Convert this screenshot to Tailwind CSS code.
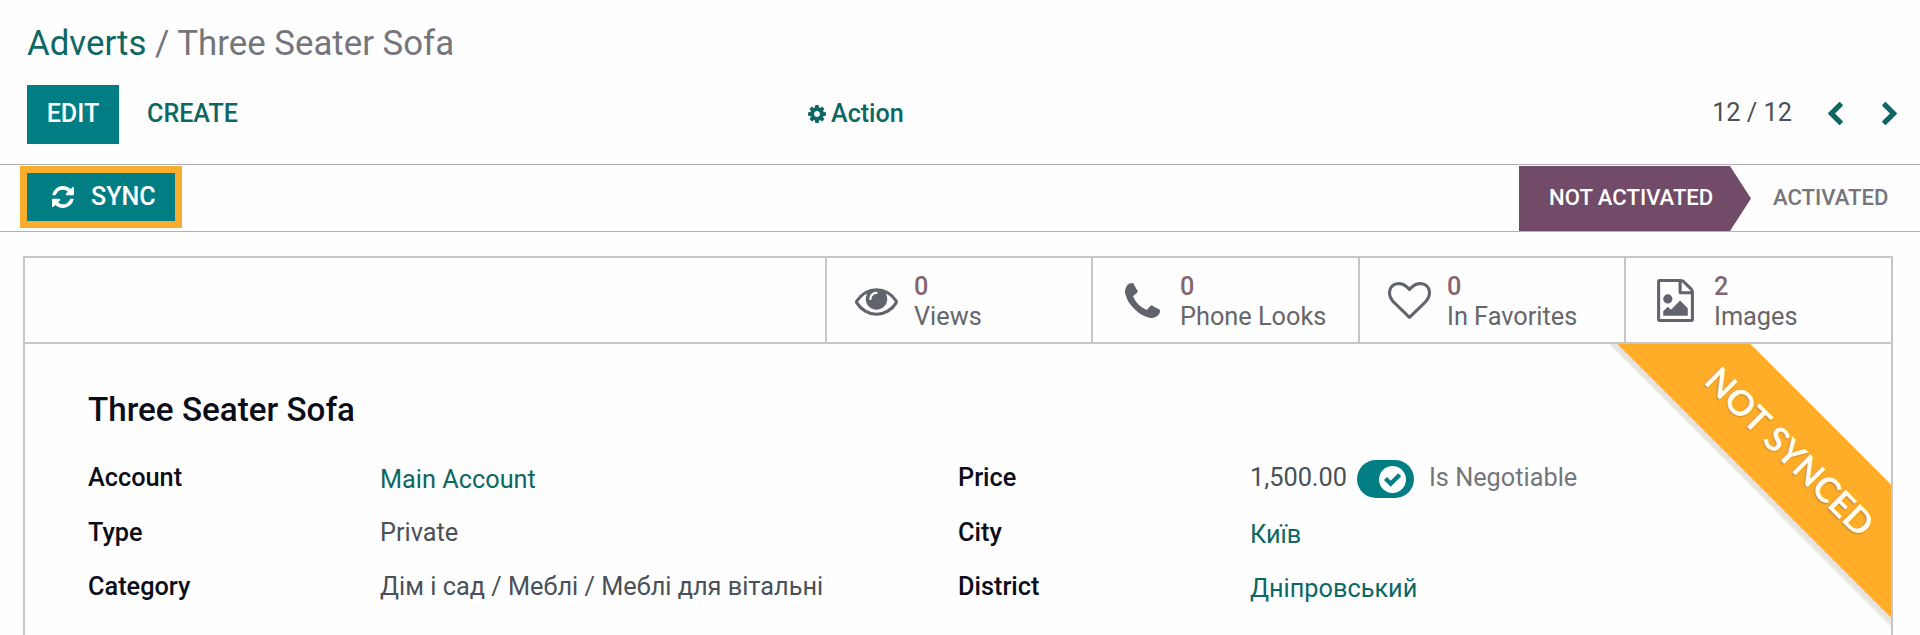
<!DOCTYPE html>
<html lang="en">
<head>
    <meta charset="UTF-8">
    <meta name="viewport" content="width=device-width, initial-scale=1.0">
    <title>Three Seater Sofa - Adverts</title>
    <script src="https://cdn.jsdelivr.net/npm/@tailwindcss/browser@4"></script>
</head>
<body class="bg-[#fefefe] h-[635px] overflow-hidden font-['Roboto',sans-serif] text-[25.3px] text-[#495057] whitespace-nowrap">
    <!-- Control panel -->
    <header class="h-[164px]">
        <div class="h-[85px] pl-[27px] pt-px flex items-center text-[34.8px]">
            <h1 class="text-[#75757c]"><a href="#" class="text-[#0d6763]">Adverts</a> / Three Seater Sofa</h1>
        </div>
        <div class="h-[59px] pl-[27px] pr-[23px] grid grid-cols-[781px_1fr_auto] items-center">
            <div class="flex h-full items-center font-medium text-[25.1px]">
                <button class="w-[92px] h-full pb-px bg-[#017e84] text-white">EDIT</button>
                <button class="ml-7 pb-px text-[#0d6763]">CREATE</button>
            </div>
            <button class="flex items-center gap-[5px] pb-px font-medium text-[25.1px] text-[#0d6763]">
                <svg class="w-[18px] h-[18px]" viewBox="128 128 1536 1536" fill="currentColor"><path d="M1152 896q0-106-75-181t-181-75-181 75-75 181 75 181 181 75 181-75 75-181zm512-109v222q0 12-8 23t-20 13l-185 28q-19 54-39 91 35 50 107 138 10 12 10 25t-9 23q-27 37-99 108t-94 71q-12 0-26-9l-138-108q-44 23-91 38-16 136-29 186-7 28-36 28h-222q-14 0-24.5-8.5t-11.5-21.5l-28-184q-49-16-90-37l-141 107q-10 9-25 9-14 0-25-11-126-114-165-168-7-10-7-23 0-12 8-23 15-21 51-66.5t54-70.5q-27-50-41-99l-183-27q-13-2-21-12.5t-8-23.5v-222q0-12 8-23t19-13l186-28q14-46 39-92-40-57-107-138-10-12-10-24 0-10 9-23 26-36 98.5-107.5t94.5-71.5q13 0 26 10l138 107q44-23 91-38 16-136 29-186 7-28 36-28h222q14 0 24.5 8.5t11.5 21.5l28 184q49 16 90 37l142-107q9-9 24-9 13 0 25 10 129 119 165 170 7 8 7 22 0 12-8 23-15 21-51 66.5t-54 70.5q26 50 41 98l183 28q13 2 21 12.5t8 23.5z"/></svg>
                Action
            </button>
            <div class="flex items-center pb-[3px] text-[#0d6763]">
                <span class="text-[#495057]">12 / 12</span>
                <svg class="ml-9 w-[15px] h-[23px]" viewBox="410 26 1036 1612" fill="currentColor"><path d="M1427 301l-531 531 531 531q19 19 19 45t-19 45l-166 166q-19 19-45 19t-45-19l-742-742q-19-19-19-45t19-45l742-742q19-19 45-19t45 19l166 166q19 19 19 45t-19 45z"/></svg>
                <svg class="ml-[39px] w-[15px] h-[23px] -scale-x-100" viewBox="410 26 1036 1612" fill="currentColor"><path d="M1427 301l-531 531 531 531q19 19 19 45t-19 45l-166 166q-19 19-45 19t-45-19l-742-742q-19-19-19-45t19-45l742-742q19-19 45-19t45 19l166 166q19 19 19 45t-19 45z"/></svg>
            </div>
        </div>
    </header>

    <!-- Status bar -->
    <div class="h-[68px] border-y border-[#b0b0b3] pl-5 flex justify-between">
        <button class="mt-px w-[162px] h-[62px] border-[7px] border-[#f9ad2f] bg-[#017e84] text-white font-medium text-[25.1px] flex items-center gap-[17px] pl-[25px]">
            <svg class="w-[22px] h-[22px]" viewBox="128 128 1536 1536" fill="currentColor"><path d="M1639 1056q0 5-1 7-64 268-268 434.5t-478 166.5q-146 0-282.5-55t-243.5-157l-129 129q-19 19-45 19t-45-19-19-45v-448q0-26 19-45t45-19h448q26 0 45 19t19 45-19 45l-137 137q71 66 161 102t187 36q134 0 250-65t186-179q11-17 53-117 8-23 30-23h192q13 0 22.5 9.5t9.5 22.5zm25-800v448q0 26-19 45t-45 19h-448q-26 0-45-19t-19-45 19-45l138-138q-148-137-349-137-134 0-250 65t-186 179q-11 17-53 117-8 23-30 23h-199q-13 0-22.5-9.5t-9.5-22.5v-7q65-268 270-434.5t480-166.5q146 0 284 55.5t245 156.5l130-129q19-19 45-19t45 19 19 45z"/></svg>
            SYNC
        </button>
        <div class="mt-px flex items-center font-medium text-[22.1px] w-[401px]">
            <span class="w-[232px] h-full pl-[30px] pb-0.5 flex items-center bg-[#714b67] text-white [clip-path:polygon(0_0,211px_0,100%_50%,211px_100%,0_100%)]">NOT ACTIVATED</span>
            <span class="pl-[22px] pb-0.5 text-[#75757c]">ACTIVATED</span>
        </div>
    </div>

    <!-- Form sheet -->
    <main class="mt-6 ml-[23px] w-[1870px] h-[400px] border-2 border-[#c6c6c8] relative">
        <div class="h-[86px] border-b-2 border-[#c6c6c8] flex justify-end text-[#66666b] leading-[30px]">
            <div class="w-[266px] border-l-2 border-[#c6c6c8] flex items-center pl-7">
                <svg class="w-[43px] h-[28px] mt-[3px]" viewBox="0 384 1792 1152" fill="#62646d"><path d="M1664 960q-152-236-381-353 61 104 61 225 0 185-131.5 316.5t-316.5 131.5-316.5-131.5-131.5-316.5q0-121 61-225-229 117-381 353 133 205 333.5 326.5t434.5 121.5 434.5-121.5 333.5-326.5zm-720-384q0-20-14-34t-34-14q-125 0-214.5 89.5t-89.5 214.5q0 20 14 34t34 14 34-14 14-34q0-86 61-147t147-61q20 0 34-14t14-34zm848 384q0 34-20 69-140 230-376.5 368.5t-499.5 138.5-499.5-139-376.5-368q-20-35-20-69t20-69q140-229 376.5-368t499.5-139 499.5 139 376.5 368q20 35 20 69z"/></svg>
                <div class="ml-4 pt-[3px]"><div class="font-medium text-[#85666f]">0</div><div>Views</div></div>
            </div>
            <div class="w-[267px] border-l-2 border-[#c6c6c8] flex items-center pl-8">
                <svg class="w-[35px] h-[35px]" viewBox="192 128 1408 1408" fill="#62646d"><path d="M1600 1240q0 27-10 70.5t-21 68.5q-21 50-122 106-94 51-186 51-27 0-53-3.5t-57.5-12.5-47-14.5-55.5-20.5-49-18q-98-35-175-83-127-79-264-216t-216-264q-48-77-83-175-3-9-18-49t-20.5-55.5-14.5-47-12.5-57.5-3.5-53q0-92 51-186 56-101 106-122 25-11 68.5-21t70.5-10q14 0 21 3 18 6 53 76 11 19 30 54t35 63.5 31 53.5q3 4 17.5 25t21.5 35.5 7 28.5q0 20-28.5 50t-62 55-62 53-28.5 46q0 9 5 22.5t8.5 20.5 14 24 11.5 19q76 137 174 235t235 174q2 1 19 11.5t24 14 20.5 8.5 22.5 5q18 0 46-28.5t53-62 55-62 50-28.5q14 0 28.5 7t35.5 21.5 25 17.5q25 15 53.5 31t63.5 35 54 30q70 35 76 53 3 7 3 21z"/></svg>
                <div class="ml-5 pt-[3px]"><div class="font-medium text-[#85666f]">0</div><div>Phone Looks</div></div>
            </div>
            <div class="w-[266px] border-l-2 border-[#c6c6c8] flex items-center pl-7">
                <svg class="w-[43px] h-[37px]" viewBox="0 128 1792 1536" fill="#62646d"><path d="M1664 596q0-81-21.5-143t-55-98.5-81.5-59.5-94-31-98-8-112 25.5-110.5 64-86.5 72-60 61.5q-18 22-49 22t-49-22q-24-28-60-61.5t-86.5-72-110.5-64-112-25.5-98 8-94 31-81.5 59.5-55 98.5-21.5 143q0 168 187 355l581 560 580-559q188-188 188-356zm128 0q0 221-229 450l-623 600q-18 18-44 18t-44-18l-624-602q-10-8-27.5-26t-55.5-65.5-68-97.5-53.5-121-23.5-138q0-220 127-344t351-124q62 0 126.5 21.5t120 58 95.5 68.5 76 68q36-36 76-68t95.5-68.5 120-58 126.5-21.5q224 0 351 124t127 344z"/></svg>
                <div class="ml-4 pt-[3px]"><div class="font-medium text-[#85666f]">0</div><div>In Favorites</div></div>
            </div>
            <div class="w-[267px] border-l-2 border-[#c6c6c8] flex items-center pl-[31px]">
                <svg class="w-[37px] h-[43px]" viewBox="128 0 1536 1792" fill="#62646d"><path d="M1596 380q28 28 48 76t20 88v1152q0 40-28 68t-68 28h-1344q-40 0-68-28t-28-68v-1600q0-40 28-68t68-28h896q40 0 88 20t76 48zm-444-244v376h376q-10-29-22-41l-313-313q-12-12-41-22zm384 1528v-1024h-416q-40 0-68-28t-28-68v-416h-768v1536h1280zm-128-448v320h-1024v-192l192-192 128 128 384-384zm-832-192q-80 0-136-56t-56-136 56-136 136-56 136 56 56 136-56 136-136 56z"/></svg>
                <div class="ml-5 pt-[3px]"><div class="font-medium text-[#85666f]">2</div><div>Images</div></div>
            </div>
        </div>

        <!-- Ribbon -->
        <div class="absolute right-0 top-[86px] w-[290px] h-[290px] overflow-hidden">
            <div class="absolute left-[-13px] top-[57px] w-[400px] h-[94px] rotate-45 bg-[#ffad28] shadow-[0_6px_2px_rgba(0,0,0,0.1)] flex items-center justify-center pl-2 font-['Lato',sans-serif] font-bold text-[35px] text-[#fffbee] [text-shadow:0_1px_2px_rgba(0,0,0,0.3)]">NOT SYNCED</div>
        </div>

        <div class="pl-[63px] pt-[43px]">
            <h2 class="h-[46px] flex items-center font-medium text-[33.2px] text-[#0b0d18]">Three Seater Sofa</h2>
            <div class="mt-[26px] grid grid-cols-[292px_578px_292px_1fr] auto-rows-[54.5px]">
                <div class="font-medium text-[#0b0d18]">Account</div>
                <a href="#" class="pt-0.5 text-[#0d6763]">Main Account</a>
                <div class="font-medium text-[#0b0d18]">Price</div>
                <div class="flex items-start">
                    <span>1,500.00</span>
                    <span class="ml-2.5 mt-px w-[57px] h-[38px] rounded-full bg-[#017e84] flex items-center justify-end pr-2">
                        <svg class="w-[27px] h-[27px]" viewBox="0 0 27 27" fill="none"><circle cx="13.5" cy="13.5" r="13.5" fill="#fefefe"/><path d="M6.5 12.5l5.2 5.2 9-9" stroke="#017e84" stroke-width="4.4"/></svg>
                    </span>
                    <span class="ml-[15px] text-[#75757c]">Is Negotiable</span>
                </div>
                <div class="font-medium text-[#0b0d18]">Type</div>
                <div>Private</div>
                <div class="font-medium text-[#0b0d18]">City</div>
                <a href="#" class="pt-0.5 text-[#0d6763]">Київ</a>
                <div class="font-medium text-[#0b0d18]">Category</div>
                <div>Дім і сад / Меблі / Меблі для вітальні</div>
                <div class="font-medium text-[#0b0d18]">District</div>
                <a href="#" class="pt-0.5 text-[#0d6763]">Дніпровський</a>
            </div>
        </div>
    </main>
</body>
</html>
